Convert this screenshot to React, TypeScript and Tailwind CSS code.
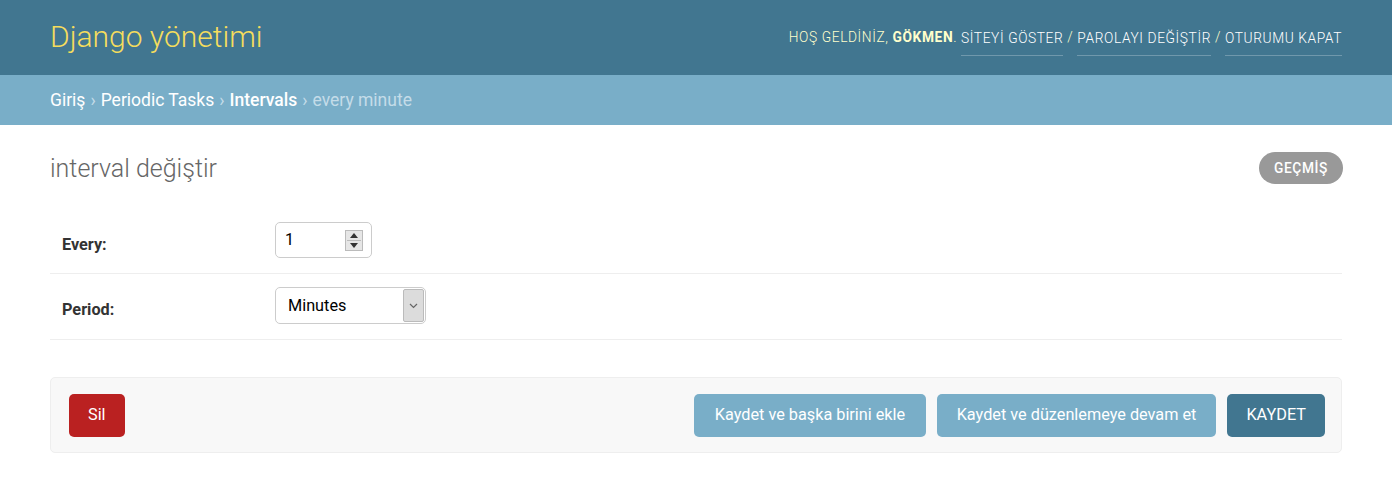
import React from "react";

export default function App() {
  const font = { fontFamily: "Roboto, 'Liberation Sans', sans-serif" };
  return (
    <div className="w-[1392px] h-[489px] bg-white" style={font}>
      {/* Header */}
      <div className="h-[75px] bg-[#417690] px-[50px] flex items-center justify-between">
        <div className="text-[30px] font-light text-[#f5dd5d] leading-none -mt-[2px]">Django yönetimi</div>
        <div className="text-[13.75px] tracking-[0.6px] text-[#ffc] font-light flex items-center">
          <span>HOŞ GELDİNİZ,&nbsp;</span>
          <strong className="font-bold">GÖKMEN</strong>
          <span>.&nbsp;</span>
          <span className="inline-block leading-[16px] text-white border-b border-white/25 pb-[9px] mt-[10px]">SİTEYİ GÖSTER</span>
          <span>&nbsp;/&nbsp;</span>
          <span className="inline-block leading-[16px] text-white border-b border-white/25 pb-[9px] mt-[10px]">PAROLAYI DEĞİŞTİR</span>
          <span>&nbsp;/&nbsp;</span>
          <span className="inline-block leading-[16px] text-white border-b border-white/25 pb-[9px] mt-[10px]">OTURUMU KAPAT</span>
        </div>
      </div>
      {/* Breadcrumbs */}
      <div className="h-[50px] bg-[#79aec8] px-[50px] flex items-center text-[17.5px] text-[#c4dce8] pt-[1px]">
        <span className="text-white">Giriş</span>
        <span className="mx-[5px]">›</span>
        <span className="text-white">Periodic Tasks</span>
        <span className="mx-[5px]">›</span>
        <span className="text-white font-medium">Intervals</span>
        <span className="mx-[5px]">›</span>
        <span>every minute</span>
      </div>
      {/* Content */}
      <div className="px-[50px] pt-[26px]">
        <div className="flex items-center justify-between h-[34px]">
          <h1 className="text-[25px] font-light text-[#666] mt-[1px]">interval değiştir</h1>
          <div className="h-[32px] px-[15px] mr-[-1px] rounded-[16px] bg-[#999] text-white text-[13.75px] font-medium tracking-[0.6px] flex items-center">
            GEÇMİŞ
          </div>
        </div>
        <div className="mt-[24px]">
          <div className="flex items-start pl-[12px] pt-[13px] h-[65px] border-b border-[#eee]">
            <label className="w-[213px] pt-[11px] text-[16.25px] font-bold text-[#333]">Every:</label>
            <div className="w-[97px] h-[36px] border border-[#ccc] rounded-[5px] flex items-center pl-[9px] pr-[8px] justify-between text-[16px] text-black">
              <span>1</span>
              <div className="w-[18px] h-[21px] bg-[#e6e6e6] border border-[#bbb] flex flex-col items-center justify-center gap-[2px]">
                <svg width="8" height="5" viewBox="0 0 8 5"><path d="M0 5 L4 0 L8 5 Z" fill="#333" /></svg>
                <div className="w-[14px] h-[1px] bg-[#bbb]" />
                <svg width="8" height="5" viewBox="0 0 8 5"><path d="M0 0 L4 5 L8 0 Z" fill="#333" /></svg>
              </div>
            </div>
          </div>
          <div className="flex items-start pl-[12px] pt-[13px] h-[66px] border-b border-[#eee]">
            <label className="w-[213px] pt-[11px] text-[16.25px] font-bold text-[#333]">Period:</label>
            <div className="w-[151px] h-[37px] border border-[#ccc] rounded-[5px] flex items-stretch text-[16.25px] text-black overflow-hidden">
              <div className="flex-1 flex items-center pl-[12px] pt-[2px]">Minutes</div>
              <div className="w-[21px] my-[1px] mr-[1px] bg-[#dcdcdc] border border-[#bbb] rounded-[2px] flex items-center justify-center">
                <svg width="9" height="6" viewBox="0 0 9 6"><path d="M1 1 L4.5 4.5 L8 1" fill="none" stroke="#666" strokeWidth="1.2" /></svg>
              </div>
            </div>
          </div>
        </div>
        {/* Submit row */}
        <div className="mt-[37px] h-[76px] bg-[#f8f8f8] border border-[#eee] rounded-[5px] flex items-center justify-between pl-[18px] pr-[16px]">
          <div className="h-[43px] px-[19px] bg-[#ba2121] rounded-[5px] text-white text-[16.25px] flex items-center">Sil</div>
          <div className="flex items-center gap-[11px]">
            <div className="h-[43px] px-[20.5px] bg-[#79aec8] rounded-[5px] text-white text-[16.25px] flex items-center">Kaydet ve başka birini ekle</div>
            <div className="h-[43px] px-[20px] bg-[#79aec8] rounded-[5px] text-white text-[16.25px] flex items-center">Kaydet ve düzenlemeye devam et</div>
            <div className="h-[43px] px-[19px] bg-[#417690] rounded-[5px] text-white text-[16.25px] flex items-center">KAYDET</div>
          </div>
        </div>
      </div>
    </div>
  );
}
